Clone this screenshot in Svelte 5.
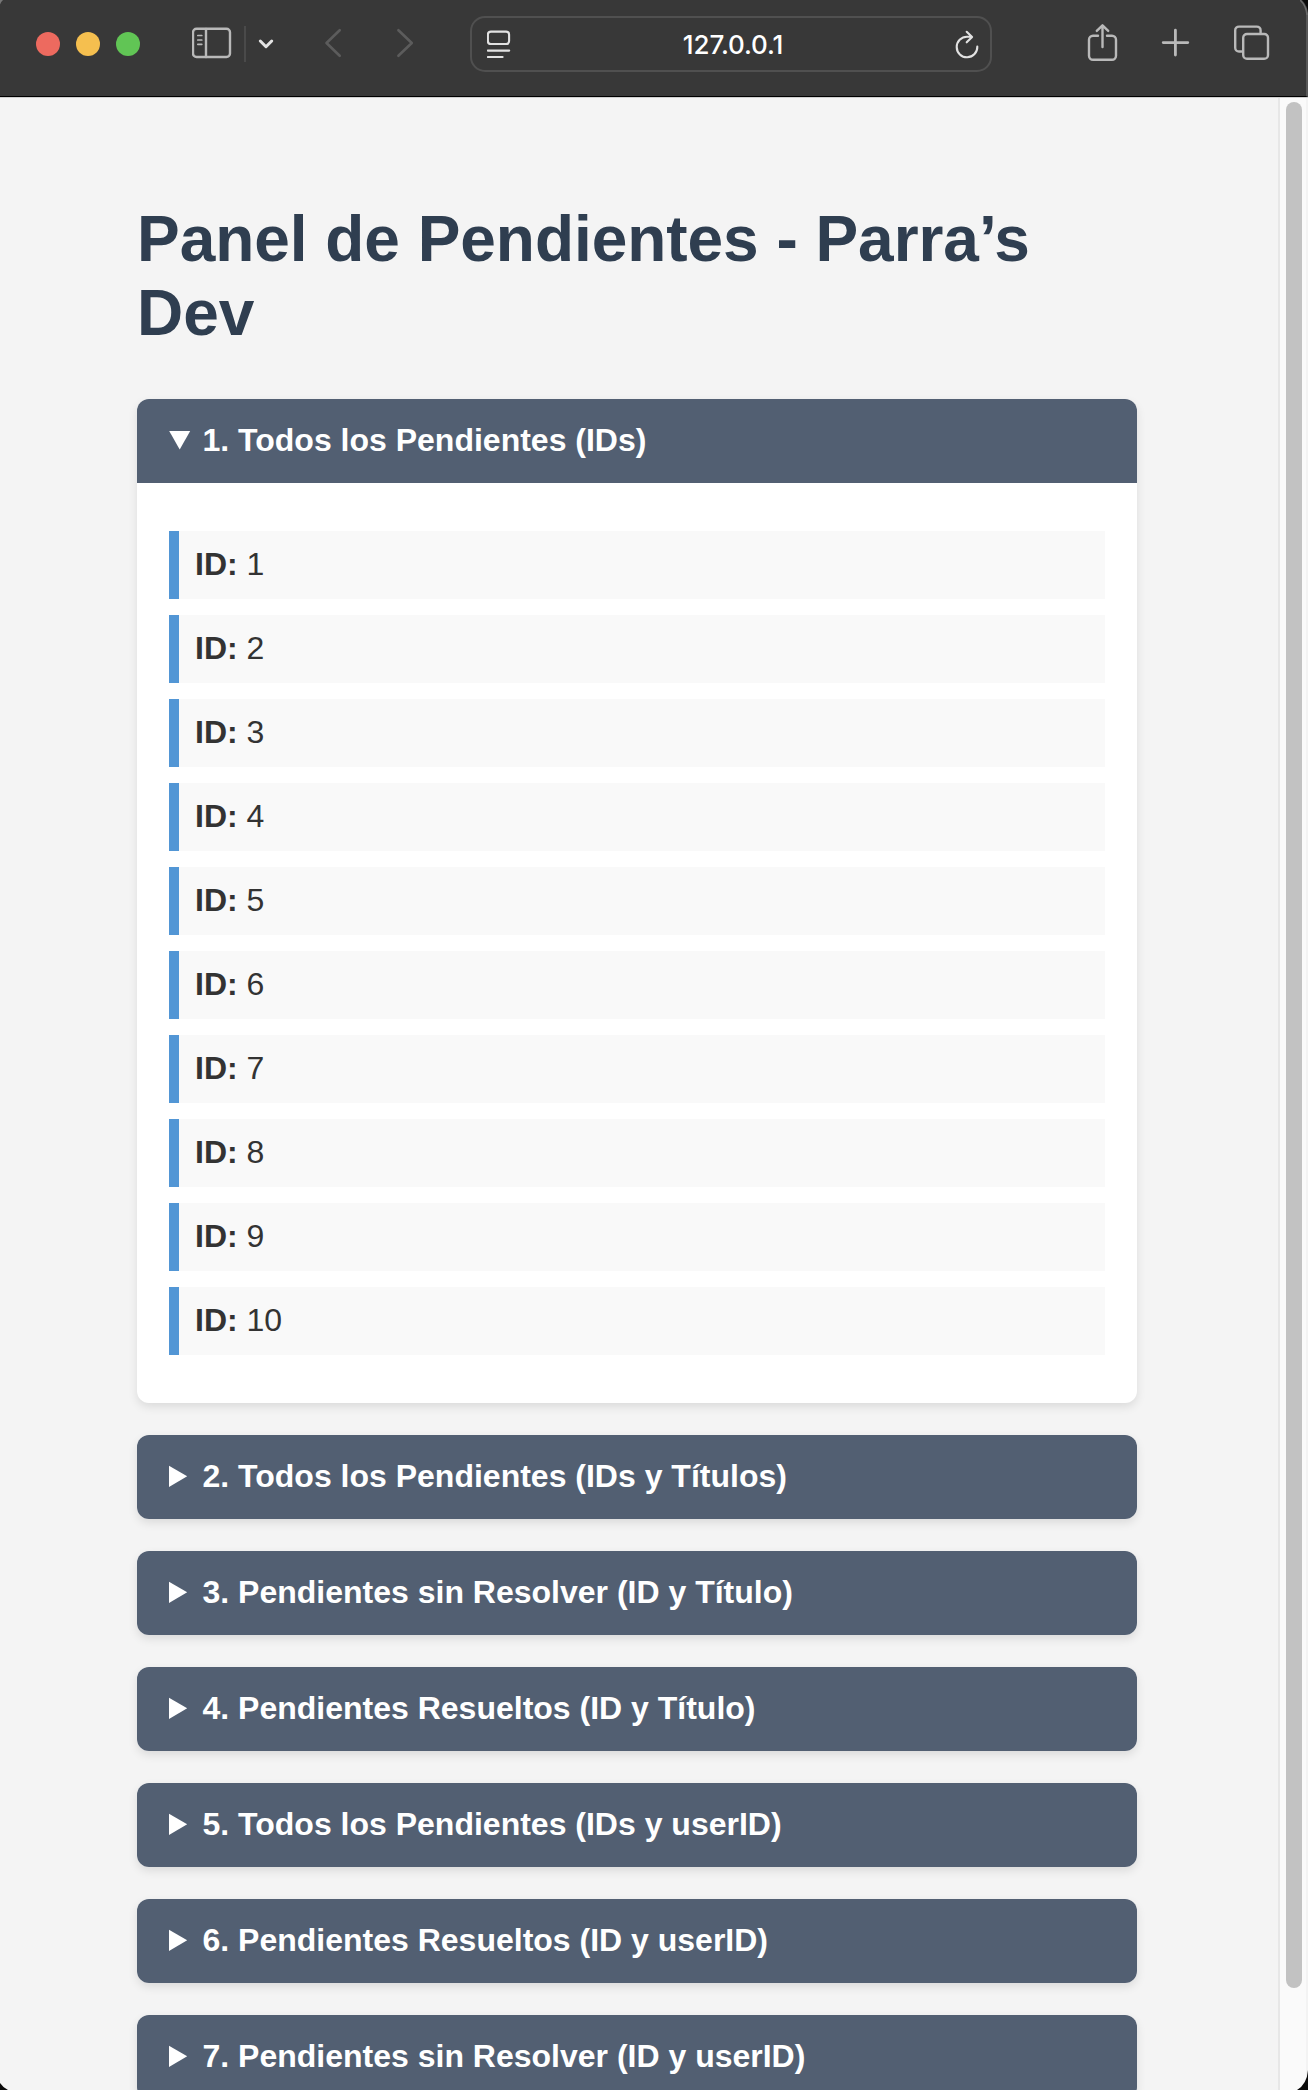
<script>
  const ids = Array.from({ length: 10 }, (_, i) => i + 1);
  const sections = [
    '1. Todos los Pendientes (IDs)',
    '2. Todos los Pendientes (IDs y Títulos)',
    '3. Pendientes sin Resolver (ID y Título)',
    '4. Pendientes Resueltos (ID y Título)',
    '5. Todos los Pendientes (IDs y userID)',
    '6. Pendientes Resueltos (ID y userID)',
    '7. Pendientes sin Resolver (ID y userID)'
  ];
  let open = $state(0);
</script>

<div class="window">
  <header class="toolbar">
    <div class="lights">
      <span class="light red"></span>
      <span class="light yellow"></span>
      <span class="light green"></span>
    </div>
    <svg class="icon sidebar" width="40" height="44" viewBox="192 22 40 44">
      <rect x="193" y="28.8" width="37" height="28.2" rx="3.5" />
      <path d="M206 29v28" />
      <path class="thin" d="M197.8 35.5h4M197.8 40h4M197.8 44.3h4" />
    </svg>
    <span class="divider"></span>
    <svg class="icon menu" width="18" height="44" viewBox="257 22 18 44">
      <path d="M260.3 41l5.7 5.7 5.7-5.7" />
    </svg>
    <svg class="icon nav back" width="20" height="44" viewBox="323 22 20 44">
      <path d="M339.7 30.2L326.5 43l13.2 12.8" />
    </svg>
    <svg class="icon nav forward" width="20" height="44" viewBox="395 22 20 44">
      <path d="M398.4 30.2L411.8 43l-13.4 12.8" />
    </svg>
    <div class="address">
      <svg class="icon bright" width="24" height="44" viewBox="487 22 24 44">
        <rect x="487.9" y="31.6" width="21.2" height="12.4" rx="3" />
        <path d="M487.8 50.6h21.4M487.8 57h14.8" />
      </svg>
      <span class="host">127.0.0.1</span>
      <svg class="icon bright" width="24" height="44" viewBox="955 22 24 44">
        <path d="M977.3 46.6a10.3 10.3 0 1 1-10.3-9.9h4.8M966.7 31.8l5.4 5.1-5.4 5.4" />
      </svg>
    </div>
    <svg class="icon share" width="32" height="44" viewBox="1087 22 32 44">
      <path d="M1098 35.8h-5a4 4 0 0 0-4 4v16a4 4 0 0 0 4 4h19a4 4 0 0 0 4-4v-16a4 4 0 0 0-4-4h-5" />
      <path d="M1102.5 47V25.5M1096.8 30.9l5.7-5.6 5.7 5.6" />
    </svg>
    <svg class="icon plus" width="30" height="44" viewBox="1161 22 30 44">
      <path class="heavy" d="M1175.4 30.2v24.8M1163.2 42.6h24.6" />
    </svg>
    <svg class="icon tabs" width="38" height="44" viewBox="1233 22 38 44">
      <path d="M1241.5 51.5h-2.5a3.8 3.8 0 0 1-3.8-3.8V30.4a3.8 3.8 0 0 1 3.8-3.8h17.8a3.8 3.8 0 0 1 3.8 3.8v2.4" />
      <rect x="1243.2" y="34" width="24.8" height="24.8" rx="3.8" />
    </svg>
  </header>

  <div class="viewport">
    <main>
      <h1>Panel de Pendientes - Parra’s Dev</h1>
      {#each sections as title, i}
        <section class="card">
          <button class="summary" onclick={() => (open = open === i ? -1 : i)}>
            <svg class="marker" width="22" height="36" viewBox="0 0 22 36">
              {#if open === i}
                <path d="M.2 8h21L10.7 26.6z" />
              {:else}
                <path d="M0 6.7v21.2l18.2-10.6z" />
              {/if}
            </svg>
            <span>{title}</span>
          </button>
          {#if open === i}
            <ul>
              {#each ids as id}
                <li><strong>ID:</strong> {id}</li>
              {/each}
            </ul>
          {/if}
        </section>
      {/each}
    </main>
    <aside class="scrollbar"><span class="thumb"></span></aside>
  </div>

  <svg class="corner top-left" width="4" height="5" viewBox="0 0 4 5"><path d="M0 0h3Q1 1.500 0 4.500z" /></svg>
  <svg class="corner top-right" width="8" height="16" viewBox="0 0 8 16">
    <path class="rim" d="M0 0Q6 5 7 15" />
    <path d="M2 0Q7 5 8 13V0z" />
  </svg>
  <svg class="corner bottom-left" width="8" height="8" viewBox="0 0 8 8"><path d="M0 1Q3 5.500 8 8H0z" /></svg>
  <svg class="corner bottom-right" width="14" height="20" viewBox="0 0 14 20">
    <path d="M14 0Q13 14 3 20H14z" />
  </svg>
</div>

<style>
  :global(body) {
    margin: 0;
    overflow: hidden;
  }
  .window {
    position: relative;
    display: flex;
    flex-direction: column;
    height: 2090px;
    overflow: hidden;
    background: #f4f4f4;
    font-family: "Liberation Sans", Arial, sans-serif;
  }
  .toolbar {
    box-sizing: border-box;
    flex: none;
    display: flex;
    align-items: center;
    height: 97px;
    padding: 0 35px 8px 36px;
    background: #383838;
    border-bottom: 1px solid #000;
    border-right: 2px solid #585858;
  }
  .lights {
    display: flex;
    gap: 16px;
  }
  .light {
    width: 24px;
    height: 24px;
    border-radius: 50%;
  }
  .red { background: #ed6a5f; }
  .yellow { background: #f5bf4f; }
  .green { background: #61c555; }
  .icon {
    flex: none;
    fill: none;
    stroke: #b9b9b9;
    stroke-width: 2.4;
    stroke-linecap: round;
    stroke-linejoin: round;
  }
  .thin { stroke-width: 1.7; }
  .heavy { stroke-width: 2.8; }
  .sidebar { margin-left: 52px; }
  .divider {
    width: 2px;
    height: 36px;
    margin-left: 12px;
    background: #4a4a4a;
  }
  .menu {
    margin-left: 11px;
    stroke: #e4e4e4;
    stroke-width: 3;
  }
  .nav { stroke: #5c5c5c; stroke-width: 2.6; }
  .back { margin-left: 48px; }
  .forward { margin-left: 52px; }
  .address {
    box-sizing: border-box;
    flex: none;
    display: flex;
    align-items: center;
    justify-content: space-between;
    width: 522px;
    height: 56px;
    margin-left: 55px;
    padding: 0 11px 0 15px;
    border: 2px solid #505050;
    border-radius: 15px;
  }
  .bright { stroke: #e2e2e2; stroke-width: 2.1; }
  .host {
    padding-top: 2px;
    color: #fff;
    font: 500 26px/36px Inter, sans-serif;
    letter-spacing: -0.1px;
  }
  .share { margin-left: 95px; }
  .plus { margin-left: 42px; }
  .tabs { margin-left: 42px; }
  .viewport {
    box-sizing: border-box;
    flex: 1;
    min-height: 0;
    display: flex;
    border-top: 1px solid #d0d0d0;
  }
  main {
    box-sizing: border-box;
    flex: 1;
    display: flex;
    flex-direction: column;
    gap: 32px;
    padding: 104px 141px 0 137px;
  }
  h1 {
    margin: 0 0 17px;
    color: #2f3e50;
    font-size: 64px;
    line-height: 74px;
    letter-spacing: -0.04px;
  }
  .card {
    flex: none;
    overflow: hidden;
    border-radius: 12px;
    background: #fff;
    box-shadow: 0 4px 10px rgba(0, 0, 0, 0.1);
  }
  .summary {
    display: flex;
    gap: 11.5px;
    width: 100%;
    height: 84px;
    padding: 24px 32px;
    border: 0;
    background: #525f72;
    color: #fff;
    font: bold 32px/34px "Liberation Sans", Arial, sans-serif;
    text-align: left;
  }
  .marker { fill: #fff; }
  ul {
    display: flex;
    flex-direction: column;
    gap: 16px;
    margin: 0;
    padding: 48px 32px;
    list-style: none;
  }
  li {
    padding: 16px 16px 18px;
    border-left: 10px solid #5296d5;
    background: #f9f9f9;
    color: #333;
    font-size: 32px;
    line-height: 34px;
  }
  .scrollbar {
    box-sizing: border-box;
    width: 30px;
    padding: 4px 4px 0 6px;
    border-left: 2px solid #e7e7e7;
    border-right: 2px solid #f3f3f3;
    background: #fafafa;
  }
  .thumb {
    display: block;
    height: 1886px;
    width: 16px;
    border-radius: 8px;
    background: #c2c2c2;
  }
  .corner { position: absolute; fill: #0a0a0a; }
  .rim { fill: none; stroke: #6a6a6a; stroke-width: 1.5; }
  .top-left { top: 0; left: 0; fill: #777; }
  .top-right { top: 0; right: 0; }
  .bottom-left { bottom: 0; left: 0; }
  .bottom-right { bottom: 0; right: 0; }
</style>
